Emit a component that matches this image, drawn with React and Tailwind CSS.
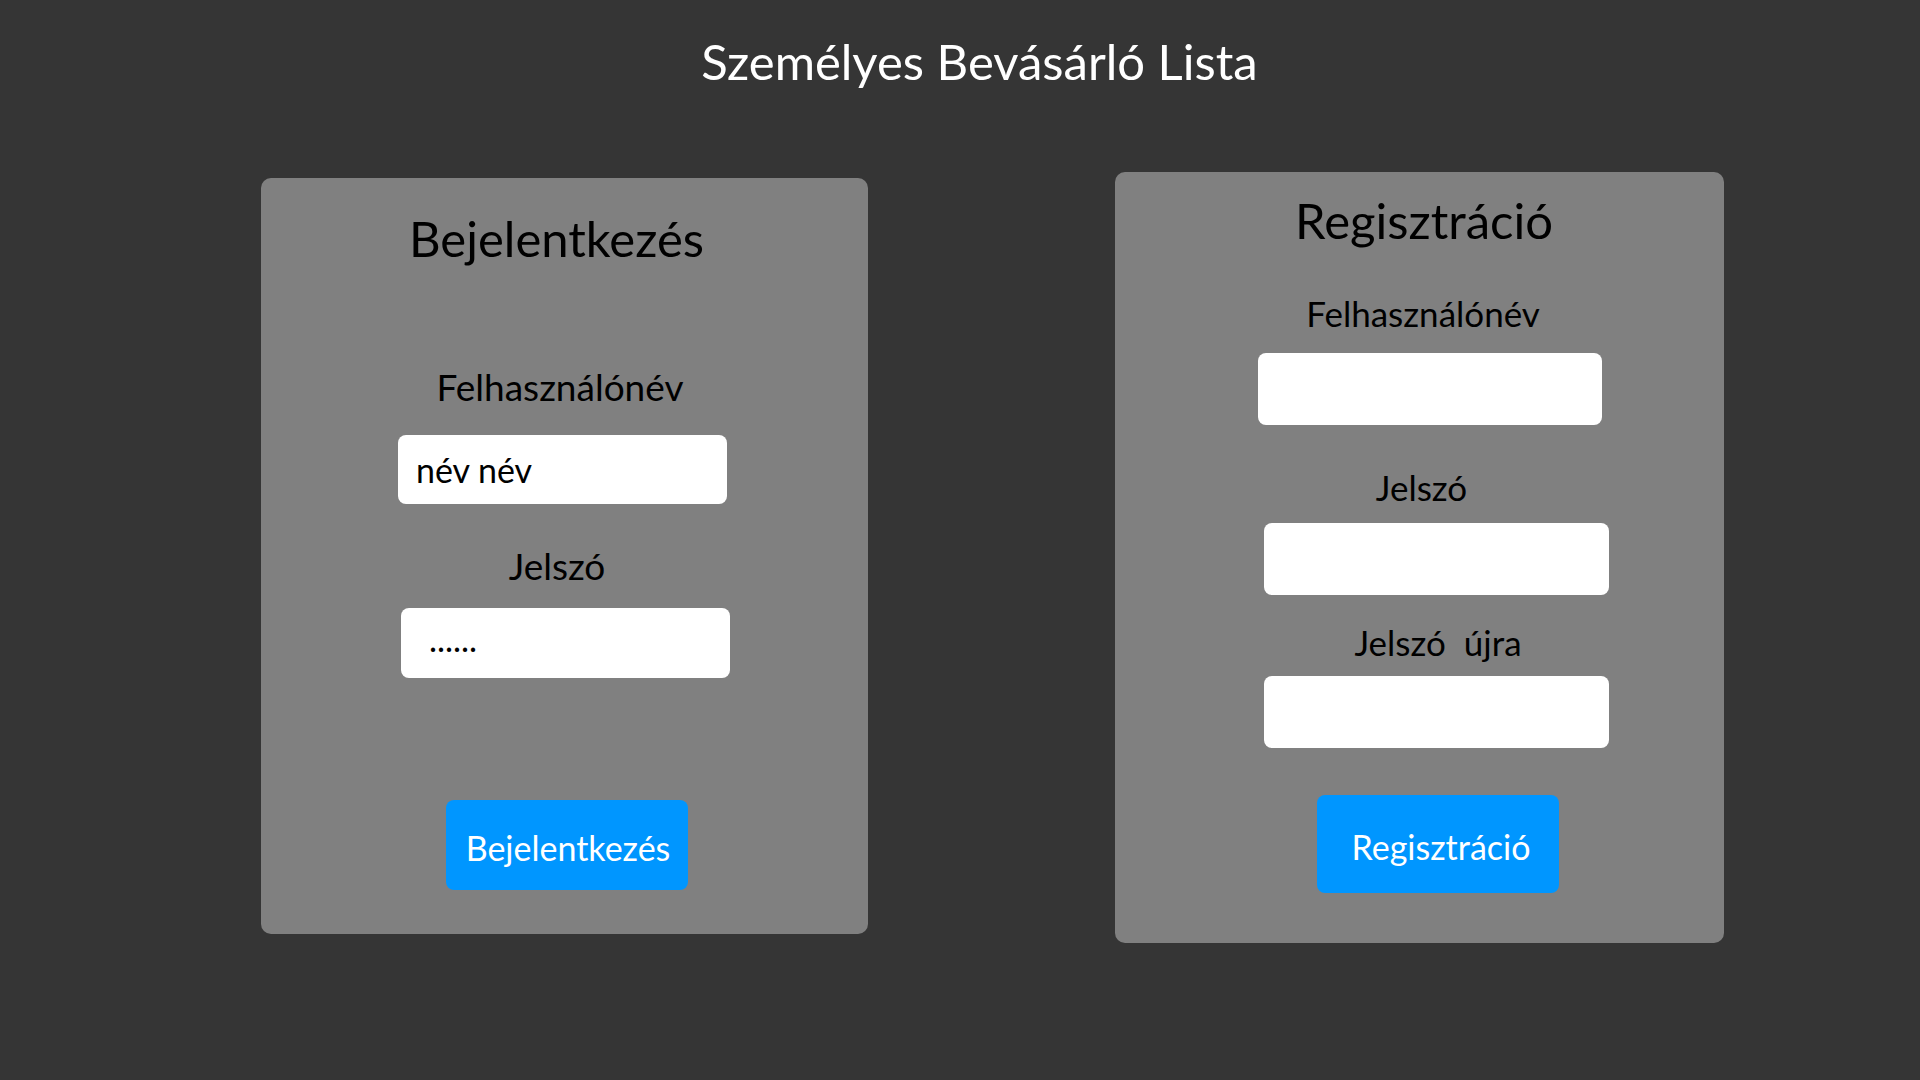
import React from 'react';

function Field({ value, className }) {
  return (
    <input
      readOnly
      value={value}
      className={`bg-white rounded-[8px] outline-none text-black text-[34px] ${className}`}
    />
  );
}

export default function App() {
  return (
    <div className="min-h-screen w-full bg-[#353535] font-['Lato','Open_Sans',sans-serif]">
      <h1 className="pt-[31px] pl-[39px] text-center text-white text-[49px] leading-[60px] font-normal">
        Személyes Bevásárló Lista
      </h1>

      <div className="flex items-start pl-[261px] gap-[247px] mt-[81px]">
        {/* Bejelentkezés */}
        <div className="mt-[6px] w-[607px] h-[756px] bg-[#808080] rounded-[10px] flex flex-col">
          <h2 className="mt-[32px] ml-[-16px] text-center text-black text-[49px] leading-[56px]">Bejelentkezés</h2>
          <div className="mt-[101px] ml-[-9px] text-center text-black text-[37px] leading-[40px]">Felhasználónév</div>
          <Field value="név név" className="mt-[28px] ml-[137px] w-[329px] h-[69px] pl-[18px]" />
          <div className="mt-[42px] ml-[-15px] text-center text-black text-[37px] leading-[40px]">Jelszó</div>
          <Field value="......" className="mt-[22px] ml-[140px] w-[329px] h-[70px] pl-[28px] pb-[10px]" />
          <button className="mt-[122px] ml-[185px] w-[242px] h-[90px] bg-[#0096ff] rounded-[8px] text-white text-[34px] leading-[40px] pl-[2px] pt-[6px]">
            Bejelentkezés
          </button>
        </div>

        {/* Regisztráció */}
        <div className="w-[609px] h-[771px] bg-[#808080] rounded-[10px] flex flex-col">
          <h2 className="mt-[20px] ml-[9px] text-center text-black text-[49px] leading-[56px]">Regisztráció</h2>
          <div className="mt-[45px] ml-[7px] text-center text-black text-[35px] leading-[40px]">Felhasználónév</div>
          <Field value="" className="mt-[20px] ml-[143px] w-[344px] h-[72px]" />
          <div className="mt-[42px] ml-[4px] text-center text-black text-[35px] leading-[40px]">Jelszó</div>
          <Field value="" className="mt-[16px] ml-[149px] w-[345px] h-[72px]" />
          <div className="mt-[27px] ml-[37px] text-center text-black text-[35px] leading-[40px] whitespace-pre">Jelszó  újra</div>
          <Field value="" className="mt-[14px] ml-[149px] w-[345px] h-[72px]" />
          <button className="mt-[47px] ml-[202px] w-[242px] h-[98px] bg-[#0096ff] rounded-[8px] text-white text-[34px] leading-[40px] pl-[6px] pt-[6px]">
            Regisztráció
          </button>
        </div>
      </div>
    </div>
  );
}
